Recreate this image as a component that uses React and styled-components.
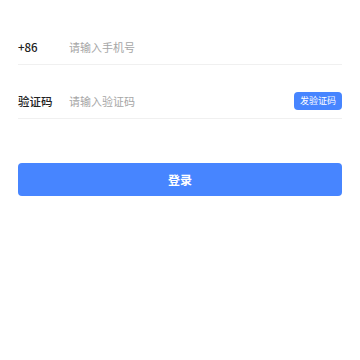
import styled, { createGlobalStyle } from 'styled-components';

const GlobalStyle = createGlobalStyle`
  html, body {
    margin: 0;
    padding: 0;
    background: #fff;
    font-family: 'Noto Sans CJK SC', 'Noto Sans', sans-serif;
  }
  input::placeholder {
    color: #a6a6a6;
  }
`;

const Page = styled.div`
  padding: 11px 18px;
`;

const Row = styled.div`
  display: flex;
  align-items: center;
  height: 35px;
  margin-top: 18px;
  border-bottom: 1px solid #f0f0f0;
`;

const Label = styled.div`
  width: 51px;
  flex-shrink: 0;
  font-size: 11.5px;
  color: #222;
  font-weight: 500;
`;

const Input = styled.input`
  flex: 1;
  min-width: 0;
  border: none;
  outline: none;
  padding: 0;
  font-size: 11px;
  font-family: inherit;
  color: #333;
  background: transparent;
`;

const SendButton = styled.button`
  height: 18px;
  padding: 0 6px;
  border: none;
  border-radius: 4px;
  background: #4785ff;
  color: #fff;
  font-size: 9px;
  font-family: inherit;
  line-height: 18px;
  white-space: nowrap;
`;

const LoginButton = styled.button`
  display: block;
  width: 100%;
  height: 33px;
  margin-top: 44px;
  border: none;
  border-radius: 4px;
  background: #4785ff;
  color: #fff;
  font-size: 12px;
  font-weight: 700;
  font-family: inherit;
`;

export default function App() {
  return (
    <>
      <GlobalStyle />
      <Page>
        <Row>
          <Label>+86</Label>
          <Input placeholder="请输入手机号" />
        </Row>
        <Row>
          <Label>验证码</Label>
          <Input placeholder="请输入验证码" />
          <SendButton>发验证码</SendButton>
        </Row>
        <LoginButton>登录</LoginButton>
      </Page>
    </>
  );
}
